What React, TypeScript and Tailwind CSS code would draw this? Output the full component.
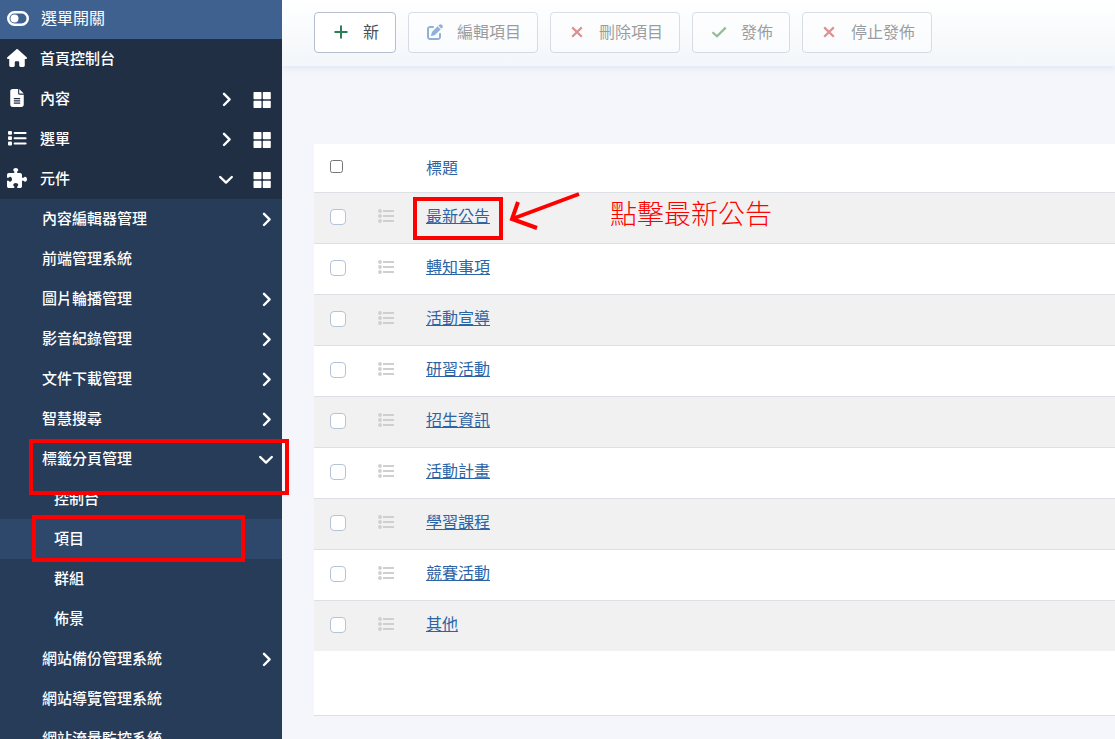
import type { ReactNode } from 'react';
import { FaHouse, FaFileLines, FaPuzzlePiece, FaPenToSquare } from 'react-icons/fa6';

type MenuItem = {
  label: string;
  icon?: ReactNode;
  arrow?: 'right' | 'down';
  dashboard?: boolean;
};

type SubItem = {
  label: string;
  arrow?: 'right' | 'down';
  level?: 2;
  active?: boolean;
  mark?: 'wide' | 'narrow';
};

function ToggleIcon() {
  return (
    <svg className="h-4 w-[22px]" viewBox="0 0 22 16" aria-hidden="true">
      <rect x="1.25" y="2.25" width="19.5" height="12.5" rx="6.25" fill="none" stroke="currentColor" strokeWidth="2.5" />
      <circle cx="7.5" cy="8.5" r="4" fill="currentColor" />
    </svg>
  );
}

function MenuListIcon() {
  return (
    <svg className="h-4 w-5" viewBox="0 0 20 16" fill="currentColor" aria-hidden="true">
      {[1, 6.3, 11.6].map((y) => (
        <g key={y}>
          <rect x="1" y={y} width="4" height="3.8" rx="1" />
          <rect x="6.6" y={y + 0.9} width="13" height="2" rx="1" />
        </g>
      ))}
    </svg>
  );
}

function RowListIcon() {
  return (
    <svg className="h-4 w-4" viewBox="0 0 16 16" fill="currentColor" aria-hidden="true">
      {[3, 8, 13].map((y) => (
        <g key={y}>
          <circle cx="2" cy={y} r="1.9" />
          <rect x="5" y={y - 1} width="11" height="2" />
        </g>
      ))}
    </svg>
  );
}

function GridIcon() {
  return (
    <svg className="h-4 w-[18px]" viewBox="0 0 18 16" fill="currentColor" aria-hidden="true">
      <rect x="0.5" y="0" width="8" height="7.3" rx="0.7" />
      <rect x="9.8" y="0" width="8" height="7.3" rx="0.7" />
      <rect x="0.5" y="8.7" width="8" height="7.3" rx="0.7" />
      <rect x="9.8" y="8.7" width="8" height="7.3" rx="0.7" />
    </svg>
  );
}

function Arrow({ direction }: { direction: 'right' | 'down' }) {
  return (
    <svg
      className="h-4 w-4"
      viewBox="0 0 16 16"
      fill="none"
      stroke="currentColor"
      strokeWidth="2.4"
      strokeLinecap="round"
      strokeLinejoin="round"
      aria-hidden="true"
    >
      <path d={direction === 'right' ? 'M6 2.8 11.6 8.4 6 14' : 'M2.2 6 8 11.6 13.8 6'} />
    </svg>
  );
}

function Cross() {
  return (
    <svg className="h-4 w-4" viewBox="0 0 16 16" fill="none" stroke="#c52827" strokeWidth="2.2" aria-hidden="true">
      <path d="M3.2 3.4 12.8 12.8M12.8 3.4 3.2 12.8" />
    </svg>
  );
}

function Plus() {
  return (
    <svg className="h-4 w-4" viewBox="0 0 16 16" fill="none" stroke="#2f7d57" strokeWidth="2" aria-hidden="true">
      <path d="M8 1.5V14.5M1.5 8H14.5" />
    </svg>
  );
}

function Check() {
  return (
    <svg className="h-4 w-4" viewBox="0 0 16 16" fill="none" stroke="#2f7d32" strokeWidth="2.2" aria-hidden="true">
      <path d="M1.5 8.2 6 12.2 14.7 3.6" />
    </svg>
  );
}

const mainMenu: MenuItem[] = [
  { label: '首頁控制台', icon: <FaHouse className="h-5 w-5" /> },
  { label: '內容', icon: <FaFileLines className="h-[18px] w-5" />, arrow: 'right', dashboard: true },
  { label: '選單', icon: <MenuListIcon />, arrow: 'right', dashboard: true },
  { label: '元件', icon: <FaPuzzlePiece className="h-5 w-5" />, arrow: 'down', dashboard: true },
];

const subMenu: SubItem[] = [
  { label: '內容編輯器管理', arrow: 'right' },
  { label: '前端管理系統' },
  { label: '圖片輪播管理', arrow: 'right' },
  { label: '影音紀錄管理', arrow: 'right' },
  { label: '文件下載管理', arrow: 'right' },
  { label: '智慧搜尋', arrow: 'right' },
  { label: '標籤分頁管理', arrow: 'down', mark: 'wide' },
  { label: '控制台', level: 2 },
  { label: '項目', level: 2, active: true, mark: 'narrow' },
  { label: '群組', level: 2 },
  { label: '佈景', level: 2 },
  { label: '網站備份管理系統', arrow: 'right' },
  { label: '網站導覽管理系統' },
  { label: '網站流量監控系統' },
];

const actions = [
  { label: '新', icon: <Plus />, disabled: false },
  { label: '編輯項目', icon: <FaPenToSquare className="h-4 w-4 text-[#2a69b8]" />, disabled: true },
  { label: '刪除項目', icon: <Cross />, disabled: true },
  { label: '發佈', icon: <Check />, disabled: true },
  { label: '停止發佈', icon: <Cross />, disabled: true },
];

const rows = ['最新公告', '轉知事項', '活動宣導', '研習活動', '招生資訊', '活動計畫', '學習課程', '競賽活動', '其他'];

function Sidebar() {
  return (
    <aside className="relative z-10 w-[282px] shrink-0 bg-[#273c58] text-[15px] font-medium text-white">
      <button type="button" className="flex h-[39px] w-full items-center gap-3 bg-[#3e618f] pb-1 pl-[7px] text-base font-normal">
        <ToggleIcon />
        <span className="pb-[2px]">選單開關</span>
      </button>
      <nav>
        <ul className="bg-[#212f45]">
          {mainMenu.map((item) => (
            <li key={item.label} className="flex h-10 items-center pr-[11px] pl-[7px]">
              <a href="#" className="flex flex-1 items-center gap-[13px] pb-[2px]">
                {item.icon}
                <span>{item.label}</span>
              </a>
              {item.arrow && <Arrow direction={item.arrow} />}
              {item.dashboard && (
                <a href="#" aria-label={item.label} className="ml-[19px] pt-[2px]">
                  <GridIcon />
                </a>
              )}
            </li>
          ))}
        </ul>
        <ul>
          {subMenu.map((item) => (
            <li key={item.label} className={`relative h-10 ${item.active ? 'bg-[#2d486b]' : ''}`}>
              <a
                href="#"
                className={`flex h-10 items-center justify-between pr-2 ${item.level ? 'pl-[54px]' : 'pl-[42px]'}`}
              >
                <span className="pb-[2px]">{item.label}</span>
                {item.arrow && <Arrow direction={item.arrow} />}
              </a>
              {item.mark === 'wide' && (
                <div className="pointer-events-none absolute top-0 left-[29px] z-10 h-14 w-[260px] border-4 border-[#ff0000]" />
              )}
              {item.mark === 'narrow' && (
                <div className="pointer-events-none absolute -top-1 left-8 z-10 h-[47px] w-[213px] border-4 border-[#ff0000]" />
              )}
            </li>
          ))}
        </ul>
      </nav>
    </aside>
  );
}

function Toolbar() {
  return (
    <header className="flex h-[66px] items-start gap-3 bg-linear-to-b from-white to-[#f3f6fa] pt-3 pl-8 shadow-[0_2px_6px_rgba(190,200,225,0.35)]">
      {actions.map((action) => (
        <button
          key={action.label}
          type="button"
          disabled={action.disabled}
          className="flex h-[41px] items-center gap-3 rounded-[4px] border border-[#b7bfcd] bg-white pr-4 pb-[2px] pl-4 text-base text-[#495057] disabled:text-[#3c3f44] disabled:opacity-50"
        >
          <span className="flex w-5 justify-center">{action.icon}</span>
          <span className="pb-[2px]">{action.label}</span>
        </button>
      ))}
    </header>
  );
}

function ItemTable() {
  return (
    <div className="mt-[78px] ml-8 border-b border-[#dcdfe4] bg-white pb-16">
      <table className="w-full table-fixed border-collapse text-left text-base leading-6">
        <colgroup>
          <col className="w-12" />
          <col className="w-16" />
          <col />
        </colgroup>
        <thead>
          <tr className="h-12 border-b border-[#dcdfe4]">
            <th className="pb-[2px] pl-4">
              <input type="checkbox" aria-label="全選" className="block h-[13px] w-[13px]" />
            </th>
            <th />
            <th className="pb-[2px] font-normal">
              <a href="#" className="text-[#2d64a6]">
                標題
              </a>
            </th>
          </tr>
        </thead>
        <tbody>
          {rows.map((title, index) => (
            <tr key={title} className="h-[51px] border-b border-[#dcdfe4] last:border-b-0 odd:bg-[#f1f1f1]">
              <td className="pb-[2px] pl-4">
                <input
                  type="checkbox"
                  aria-label={title}
                  className="block h-4 w-4 appearance-none rounded-[4px] border border-[#b5c3d8] bg-white checked:bg-[#2d64a6]"
                />
              </td>
              <td className="pb-1 pl-4 text-[#cfcfcf]">
                <RowListIcon />
              </td>
              <td className="relative pb-[6px]">
                <a href="#" className="text-[#2d64a6] underline">
                  {title}
                </a>
                {index === 0 && <Callout />}
              </td>
            </tr>
          ))}
        </tbody>
      </table>
    </div>
  );
}

function Callout() {
  return (
    <div className="pointer-events-none absolute -top-1 -left-[13px] z-10 flex items-start">
      <div className="mt-2 h-[43px] w-[90px] border-4 border-[#ff0000]" />
      <svg className="ml-[5px] h-12 w-[74px]" viewBox="0 0 74 48" fill="none" stroke="#ff0000" strokeWidth="4" aria-hidden="true">
        <path d="M71 5 4 30M10 13 4 30 29 39" />
      </svg>
      <span className="mt-[6px] ml-7 text-[27px] leading-9 font-light whitespace-nowrap text-[#ff0000]">點擊最新公告</span>
    </div>
  );
}

export default function App() {
  return (
    <div className="flex h-screen overflow-hidden bg-[#f4f6fb] font-['Noto_Sans_CJK_TC','Noto_Sans',sans-serif]">
      <Sidebar />
      <main className="min-w-0 flex-1">
        <Toolbar />
        <ItemTable />
      </main>
    </div>
  );
}
